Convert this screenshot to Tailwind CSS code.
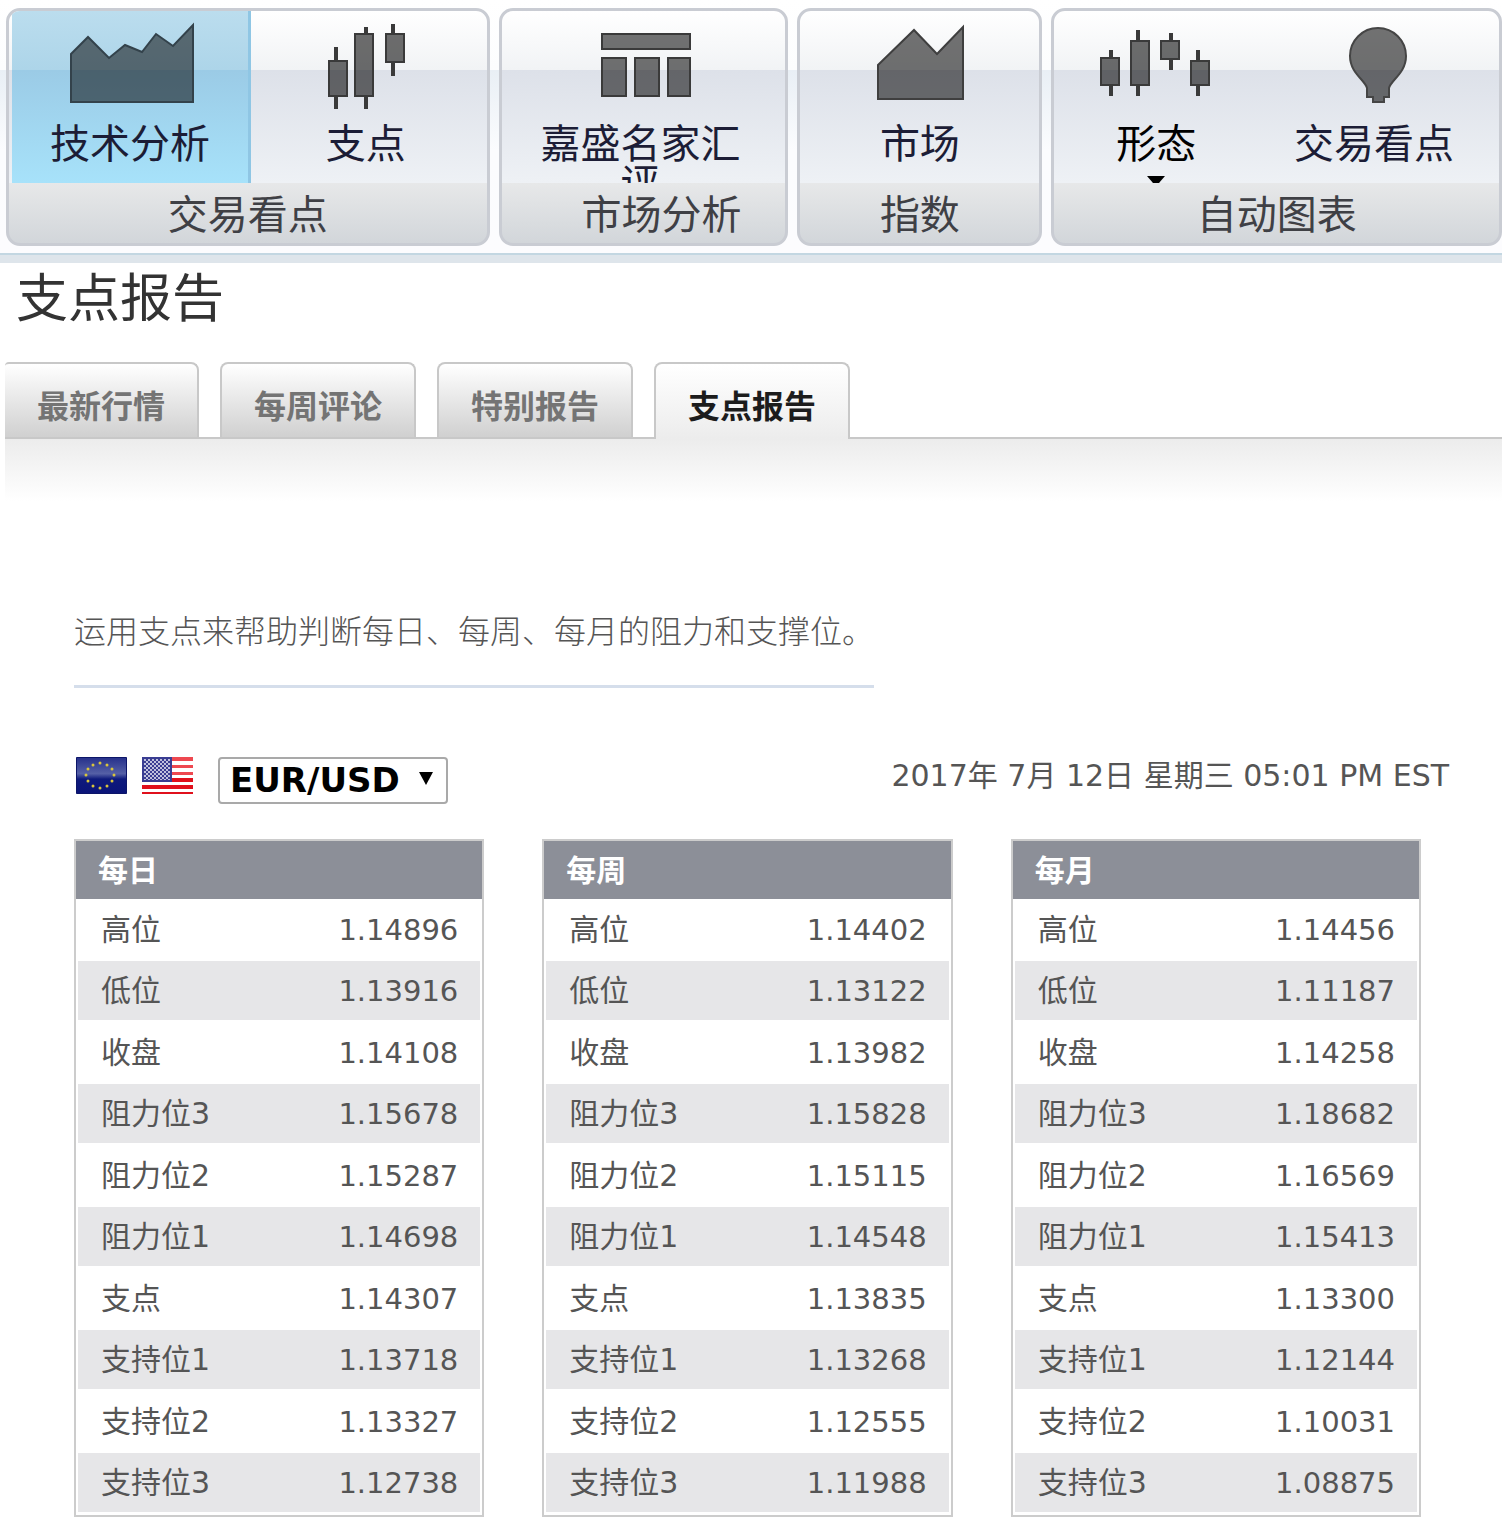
<!DOCTYPE html>
<html lang="zh-CN">
<head>
    <meta charset="UTF-8">
    <meta name="viewport" content="width=device-width, initial-scale=1.0">
    <title>支点报告</title>
    <script src="https://cdn.jsdelivr.net/npm/@tailwindcss/browser@4"></script>
</head>
<body class="bg-white text-[#555] font-['DejaVu_Sans','Noto_Sans_CJK_SC',sans-serif] overflow-x-hidden">

<!-- 工具栏 -->
<header class="border-b-8 border-[#dee5eb]">
    <div class="grid grid-cols-[484fr_290fr_245fr_451fr] gap-[9px] pt-2 pb-[7px] pl-[6px] border-b-2 border-[#c3d7e2] bg-[linear-gradient(#fff_0,#fcfdfe_70px,#e9eff5_70px,#fbfcfe_150px,#fcfcfe_100%)] text-[40px] leading-[40px] text-[#1c1d36] font-['Noto_Sans_CJK_SC',sans-serif]">

        <section class="rounded-[14px] border-3 border-[#c9ccd3] overflow-hidden bg-[linear-gradient(#fff_0,#f1f3f5_59px,#dde1e9_59px,#eef1f5_172px,#e7e8e9_172px,#d2d6da_100%)]">
            <div class="grid grid-cols-[239fr_230fr] h-[172px] pl-[3px] pr-[6px]">
                <button class="flex flex-col items-center overflow-hidden border-r-3 border-[#8fc6e4] bg-[linear-gradient(#bbddee_0,#add5e9_59px,#9bcbe6_59px,#a7e2fa_100%)]">
                    <svg class="w-[130px] h-[100px] shrink-0 mb-[10px]" viewBox="66 11 130 100" fill="#000" fill-opacity=".52" stroke="#33424b" stroke-width="2">
                        <path d="M72 54 89 37l21 21 16-13 17 7 14-18 17 12 20-21v77H72z"/>
                    </svg>
                    技术分析
                </button>
                <button class="flex flex-col items-center overflow-hidden">
                    <svg class="w-[100px] h-[100px] shrink-0 mb-[10px]" viewBox="316 11 100 100" fill="#000" fill-opacity=".57" stroke="#3a3a3a" stroke-width="2">
                        <path d="M329 61h18v35h-18zM355 34h18v62h-18zM386 34h18v28h-18z"/>
                        <path stroke-width="4" d="M336 47v13M336 97v12M366 27v7M366 97v12M393 24v9M393 63v13"/>
                    </svg>
                    支点
                </button>
            </div>
            <h2 class="h-[60px] leading-[58px] text-center text-[#3f4045]">交易看点</h2>
        </section>

        <section class="rounded-[14px] border-3 border-[#c9ccd3] overflow-hidden bg-[linear-gradient(#fff_0,#f1f3f5_59px,#dde1e9_59px,#eef1f5_172px,#e7e8e9_172px,#d2d6da_100%)]">
            <div class="flex justify-center h-[172px] pr-[6px]">
                <button class="flex flex-col items-center overflow-hidden w-[230px]">
                    <svg class="w-[100px] h-[100px] shrink-0 mb-[10px]" viewBox="591 11 100 100" fill="#000" fill-opacity=".55" stroke="#3a3a3a" stroke-width="2">
                        <path d="M602 34h88v15h-88zM602 58h24v38h-24zM635 58h24v38h-24zM668 58h22v38h-22z"/>
                    </svg>
                    <span class="w-[200px] text-center">嘉盛名家汇评</span>
                </button>
            </div>
            <h2 class="h-[60px] leading-[58px] pl-9 text-center text-[#3f4045]">市场分析</h2>
        </section>

        <section class="rounded-[14px] border-3 border-[#c9ccd3] overflow-hidden bg-[linear-gradient(#fff_0,#f1f3f5_59px,#dde1e9_59px,#eef1f5_172px,#e7e8e9_172px,#d2d6da_100%)]">
            <div class="flex justify-center h-[172px]">
                <button class="flex flex-col items-center overflow-hidden w-full">
                    <svg class="w-[100px] h-[100px] shrink-0 mb-[10px]" viewBox="870 11 100 100" fill="#000" fill-opacity=".55" stroke="#3f3f3f" stroke-width="2">
                        <path d="M878 65l36-35 23 24 26-27v72h-85z"/>
                    </svg>
                    市场
                </button>
            </div>
            <h2 class="h-[60px] leading-[58px] text-center text-[#3f4045]">指数</h2>
        </section>

        <section class="rounded-[14px] border-3 border-[#c9ccd3] overflow-hidden bg-[linear-gradient(#fff_0,#f1f3f5_59px,#dde1e9_59px,#eef1f5_172px,#e7e8e9_172px,#d2d6da_100%)]">
            <div class="grid grid-cols-[204fr_232fr] h-[172px] pr-[9px]">
                <button class="flex flex-col items-center overflow-hidden text-black">
                    <svg class="w-[120px] h-[100px] shrink-0 mb-[10px]" viewBox="1096 11 120 100" fill="#000" fill-opacity=".57" stroke="#3a3a3a" stroke-width="2">
                        <path d="M1101 58h18v27h-18zM1131 41h18v44h-18zM1161 41h18v18h-18zM1191 61h18v24h-18z"/>
                        <path stroke-width="4" d="M1111 50v8M1111 86v10M1138 30v11M1138 86v10M1171 33v8M1171 60v10M1198 50v10M1198 86v10"/>
                    </svg>
                    形态
                    <svg class="w-5 h-[7px] shrink-0 mt-[15px]" viewBox="0 0 20 7" fill="#000"><path d="M1 0h18l-6 7H7z"/></svg>
                </button>
                <button class="flex flex-col items-center overflow-hidden">
                    <svg class="w-[80px] h-[100px] shrink-0 mb-[10px]" viewBox="1334 11 80 100" fill="#000" fill-opacity=".55" stroke="#454545" stroke-width="2">
                        <path d="M1367 97v-9c-2-8-17-15-17-32a28 28 0 0 1 56 0c0 17-15 24-17 32v9h-5v5h-11v-5z"/>
                    </svg>
                    交易看点
                </button>
            </div>
            <h2 class="h-[60px] leading-[58px] text-center text-[#3f4045]">自动图表</h2>
        </section>
    </div>
</header>

<h1 class="mt-[6px] pl-[16px] text-[52px] leading-[52px] text-[#333] font-['Noto_Sans_CJK_SC',sans-serif]">支点报告</h1>

<!-- 标签页 -->
<div class="mt-[41px] pl-[5px]">
    <nav class="flex gap-[21px] border-b-2 border-[#c8c8c8] text-[32px] leading-[60px] text-center font-bold text-[#747474] font-['Noto_Sans_CJK_SC',sans-serif]">
        <a href="#" class="w-[194px] h-[75px] pt-[10px] rounded-tr-lg rounded-tl-sm border-t-2 border-r-2 border-[#c8c8c8] bg-linear-to-b from-white to-[#d0d0d0]">最新行情</a>
        <a href="#" class="w-[196px] h-[75px] pt-[10px] rounded-t-lg border-2 border-b-0 border-[#c8c8c8] bg-linear-to-b from-white to-[#d0d0d0]">每周评论</a>
        <a href="#" class="w-[196px] h-[75px] pt-[10px] rounded-t-lg border-2 border-b-0 border-[#c8c8c8] bg-linear-to-b from-white to-[#d0d0d0]">特别报告</a>
        <a href="#" class="w-[196px] h-[77px] -mb-[2px] pt-[10px] rounded-t-lg border-2 border-b-0 border-[#c8c8c8] bg-linear-to-b from-white to-[#ececec] text-[#1c1c1c]">支点报告</a>
    </nav>
    <div class="h-[62px] bg-linear-to-b from-[#ececec] to-white"></div>
</div>

<main class="pt-[112px] pl-[74px] pr-[81px]">
    <p class="w-[800px] pb-[40px] border-b-3 border-[#d5deeb] text-[32px] leading-[32px] whitespace-nowrap text-[#555] font-['Noto_Sans_CJK_SC',sans-serif] font-light">运用支点来帮助判断每日、每周、每月的阻力和支撑位。</p>

    <div class="flex items-start mt-[69px] -mr-7">
        <!-- 欧盟国旗 -->
        <svg class="w-[51px] h-[37px] ml-[2px]" viewBox="0 0 51 37">
            <defs>
                <linearGradient id="eu" x2="0" y2="1">
                    <stop stop-color="#26308a"/>
                    <stop offset=".45" stop-color="#5560a6"/>
                    <stop offset=".6" stop-color="#0e1a7c"/>
                    <stop offset="1" stop-color="#0a1478"/>
                </linearGradient>
            </defs>
            <path fill="url(#eu)" stroke="#0c1568" d="M.5.5h50v36H.5z"/>
            <g fill="#d9c53c">
                <circle cx="24" cy="6" r="1.5"/><circle cx="31" cy="8" r="1.5"/><circle cx="36" cy="12" r="1.5"/>
                <circle cx="38" cy="18" r="1.5"/><circle cx="36" cy="24" r="1.5"/><circle cx="31" cy="29" r="1.5"/>
                <circle cx="24" cy="31" r="1.5"/><circle cx="17" cy="29" r="1.5"/><circle cx="12" cy="24" r="1.5"/>
                <circle cx="10" cy="18" r="1.5"/><circle cx="12" cy="12" r="1.5"/><circle cx="17" cy="8" r="1.5"/>
            </g>
        </svg>
        <!-- 美国国旗 -->
        <svg class="w-[51px] h-[37px] ml-[15px]" viewBox="0 0 51 37">
            <defs>
                <pattern id="stars" width="4" height="4" patternUnits="userSpaceOnUse">
                    <circle cx="1" cy="1" r=".9" fill="#fff"/><circle cx="3" cy="3" r=".9" fill="#fff"/>
                </pattern>
            </defs>
            <path fill="#fff" d="M0 0h51v37H0z"/>
            <path fill="#ee4850" d="M0 0h51v4H0zM0 8h51v3H0zM0 15h51v3H0z"/>
            <path fill="#e0101c" d="M0 21h51v4H0zM0 28h51v4H0zM0 35h51v2H0z"/>
            <path fill="#3a3d92" d="M0 0h30v25H0z"/>
            <path fill="url(#stars)" d="M2 2h26v21H2z"/>
        </svg>

        <div class="relative ml-[25px]">
            <select aria-label="货币对" class="block w-[230px] h-[47px] pl-[10px] appearance-none rounded-[4px] border-2 border-[#a9a9a9] bg-white text-[34px] leading-[43px] font-bold text-black">
                <option>EUR/USD</option>
            </select>
            <svg class="absolute right-[15px] top-[15px] w-[14px] h-[13px] pointer-events-none" viewBox="0 0 14 13"><path d="M0 0h14L7 13z"/></svg>
        </div>

        <p class="ml-auto text-[30px] leading-[38px] whitespace-nowrap">2017年 7月 12日 星期三 05:01 PM EST</p>
    </div>

    <!-- 支点数据 -->
    <div class="grid grid-cols-3 gap-[58px] mt-[35px] text-[30px] leading-[30px]">
        <div class="border-2 border-[#ccc] pb-px">
            <table class="w-full border-separate border-spacing-0 [&_th]:h-[58px] [&_th]:pt-[2px] [&_th]:pl-[22px] [&_th]:text-left [&_th]:text-white [&_th]:bg-[#8c8f98] [&_td]:border-x-2 [&_td]:border-white [&_tr:nth-child(odd)_td]:h-[62px] [&_tr:nth-child(even)_td]:h-[61px] [&_tr:nth-child(even)_td]:border-b-2 [&_tr:nth-child(even)_td]:bg-[#e6e6e8] [&_td:first-child]:border-r-0 [&_td:first-child]:pl-[23px] [&_td:last-child]:border-l-0 [&_td:last-child]:pr-[22px] [&_td:last-child]:text-right [&_td:last-child]:text-[29px]">
                <thead><tr><th colspan="2">每日</th></tr></thead>
                <tbody>
                    <tr><td>高位</td><td>1.14896</td></tr>
                    <tr><td>低位</td><td>1.13916</td></tr>
                    <tr><td>收盘</td><td>1.14108</td></tr>
                    <tr><td>阻力位3</td><td>1.15678</td></tr>
                    <tr><td>阻力位2</td><td>1.15287</td></tr>
                    <tr><td>阻力位1</td><td>1.14698</td></tr>
                    <tr><td>支点</td><td>1.14307</td></tr>
                    <tr><td>支持位1</td><td>1.13718</td></tr>
                    <tr><td>支持位2</td><td>1.13327</td></tr>
                    <tr><td>支持位3</td><td>1.12738</td></tr>
                </tbody>
            </table>
        </div>

        <div class="border-2 border-[#ccc] pb-px">
            <table class="w-full border-separate border-spacing-0 [&_th]:h-[58px] [&_th]:pt-[2px] [&_th]:pl-[22px] [&_th]:text-left [&_th]:text-white [&_th]:bg-[#8c8f98] [&_td]:border-x-2 [&_td]:border-white [&_tr:nth-child(odd)_td]:h-[62px] [&_tr:nth-child(even)_td]:h-[61px] [&_tr:nth-child(even)_td]:border-b-2 [&_tr:nth-child(even)_td]:bg-[#e6e6e8] [&_td:first-child]:border-r-0 [&_td:first-child]:pl-[23px] [&_td:last-child]:border-l-0 [&_td:last-child]:pr-[22px] [&_td:last-child]:text-right [&_td:last-child]:text-[29px]">
                <thead><tr><th colspan="2">每周</th></tr></thead>
                <tbody>
                    <tr><td>高位</td><td>1.14402</td></tr>
                    <tr><td>低位</td><td>1.13122</td></tr>
                    <tr><td>收盘</td><td>1.13982</td></tr>
                    <tr><td>阻力位3</td><td>1.15828</td></tr>
                    <tr><td>阻力位2</td><td>1.15115</td></tr>
                    <tr><td>阻力位1</td><td>1.14548</td></tr>
                    <tr><td>支点</td><td>1.13835</td></tr>
                    <tr><td>支持位1</td><td>1.13268</td></tr>
                    <tr><td>支持位2</td><td>1.12555</td></tr>
                    <tr><td>支持位3</td><td>1.11988</td></tr>
                </tbody>
            </table>
        </div>

        <div class="border-2 border-[#ccc] pb-px">
            <table class="w-full border-separate border-spacing-0 [&_th]:h-[58px] [&_th]:pt-[2px] [&_th]:pl-[22px] [&_th]:text-left [&_th]:text-white [&_th]:bg-[#8c8f98] [&_td]:border-x-2 [&_td]:border-white [&_tr:nth-child(odd)_td]:h-[62px] [&_tr:nth-child(even)_td]:h-[61px] [&_tr:nth-child(even)_td]:border-b-2 [&_tr:nth-child(even)_td]:bg-[#e6e6e8] [&_td:first-child]:border-r-0 [&_td:first-child]:pl-[23px] [&_td:last-child]:border-l-0 [&_td:last-child]:pr-[22px] [&_td:last-child]:text-right [&_td:last-child]:text-[29px]">
                <thead><tr><th colspan="2">每月</th></tr></thead>
                <tbody>
                    <tr><td>高位</td><td>1.14456</td></tr>
                    <tr><td>低位</td><td>1.11187</td></tr>
                    <tr><td>收盘</td><td>1.14258</td></tr>
                    <tr><td>阻力位3</td><td>1.18682</td></tr>
                    <tr><td>阻力位2</td><td>1.16569</td></tr>
                    <tr><td>阻力位1</td><td>1.15413</td></tr>
                    <tr><td>支点</td><td>1.13300</td></tr>
                    <tr><td>支持位1</td><td>1.12144</td></tr>
                    <tr><td>支持位2</td><td>1.10031</td></tr>
                    <tr><td>支持位3</td><td>1.08875</td></tr>
                </tbody>
            </table>
        </div>
    </div>
</main>
</body>
</html>
